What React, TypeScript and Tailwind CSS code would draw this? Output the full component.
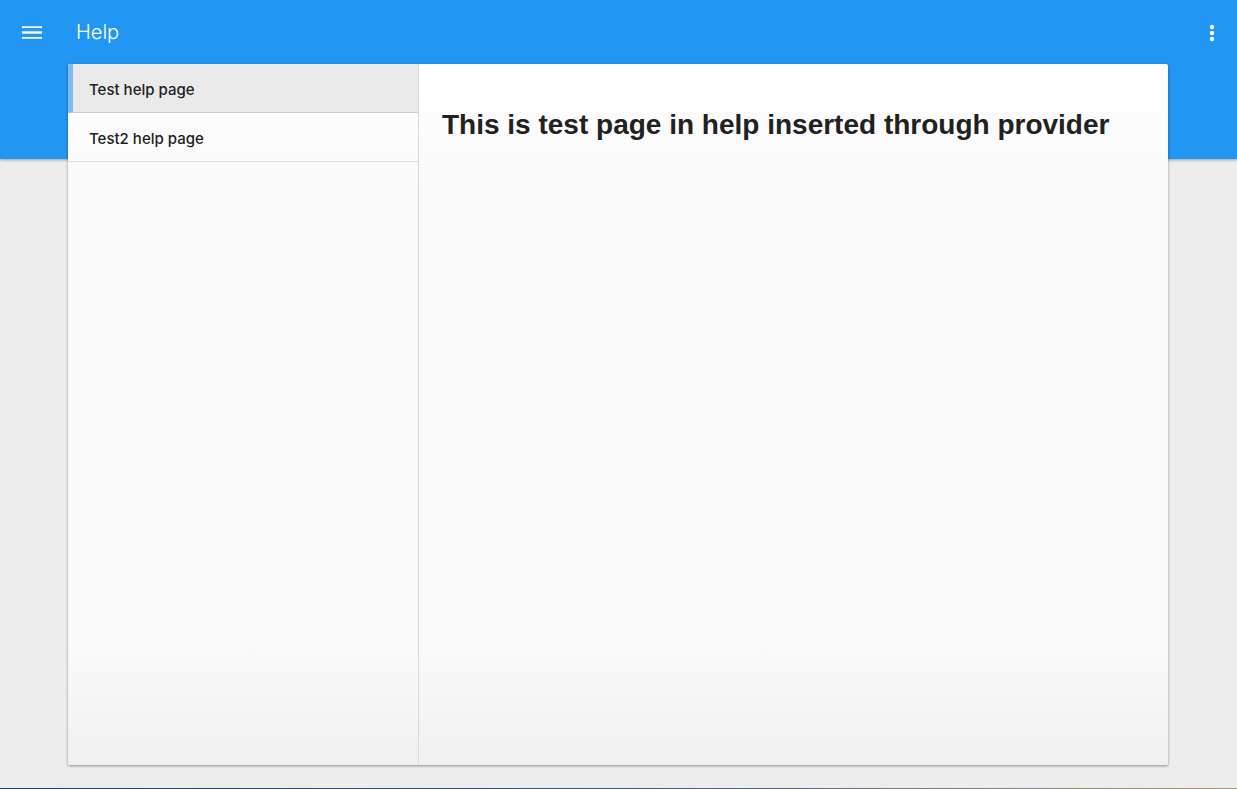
const pages = ["Test help page", "Test2 help page"];

export default function App() {
  return (
    <div className="relative isolate flex min-h-screen flex-col bg-[#ededed] font-['Liberation_Sans',Arial,sans-serif] text-[#212121]">
      <div className="absolute inset-x-0 top-0 -z-10 h-[159px] bg-[#2196f3] shadow-[0_1px_3px_rgba(0,0,0,0.35)]" />
      <header className="flex h-16 items-center px-5 text-white">
        <button type="button" aria-label="Open menu" className="flex size-6 items-center justify-center">
          <svg viewBox="0 0 24 24" className="size-6" fill="currentColor" aria-hidden="true">
            <path opacity=".7" d="M2 6h20v1H2zM2 11h20v1H2zM2 13h20v1H2zM2 18h20v1H2z" />
            <path d="M2 7h20v1H2zM2 12h20v1H2zM2 17h20v1H2z" />
          </svg>
        </button>
        <h1 className="ml-8 font-['Inter',sans-serif] text-xl font-light">Help</h1>
        <button type="button" aria-label="More options" className="ml-auto -mr-2 flex size-6 items-center justify-center">
          <svg viewBox="0 0 24 24" className="size-6" fill="currentColor" aria-hidden="true">
            <circle cx="11" cy="7" r="2.200" />
            <circle cx="11" cy="13" r="2.200" />
            <circle cx="11" cy="19" r="2.200" />
          </svg>
        </button>
      </header>
      <main className="mr-[69px] mb-[23px] ml-[68px] flex flex-1 overflow-hidden rounded-[2px] bg-[linear-gradient(to_bottom,#ffffff_0%,#fafafa_17%,#fafafa_83%,#f0f0f0_100%)] shadow-[0_1px_3px_rgba(0,0,0,0.4)]">
        <nav
          aria-label="Help pages"
          className="w-[351px] shrink-0 border-r border-[#d9d9d9] font-['Inter','Liberation_Sans',sans-serif] text-[15px] font-medium"
        >
          <ul>
            {pages.map((page, i) => (
              <li key={page}>
                <a
                  href="#"
                  aria-current={i === 0 ? "page" : undefined}
                  className={
                    i === 0
                      ? "flex h-[49px] items-center border-b border-l-[5px] border-b-[#cccccc] border-l-[#7dbcf2] bg-[#eaeaea] pt-1 pl-4"
                      : "flex h-[49px] items-center border-b border-b-[#dcdcdc] pt-1 pl-[21px]"
                  }
                >
                  {page}
                </a>
              </li>
            ))}
          </ul>
        </nav>
        <article className="flex-1 px-[23px] pt-[45px]">
          <h2 className="text-[28px] leading-8 font-bold">This is test page in help inserted through provider</h2>
        </article>
      </main>
      <div className="h-px bg-[linear-gradient(to_right,#1c4468,#42587a_50%,#a89878)]" />
    </div>
  );
}
